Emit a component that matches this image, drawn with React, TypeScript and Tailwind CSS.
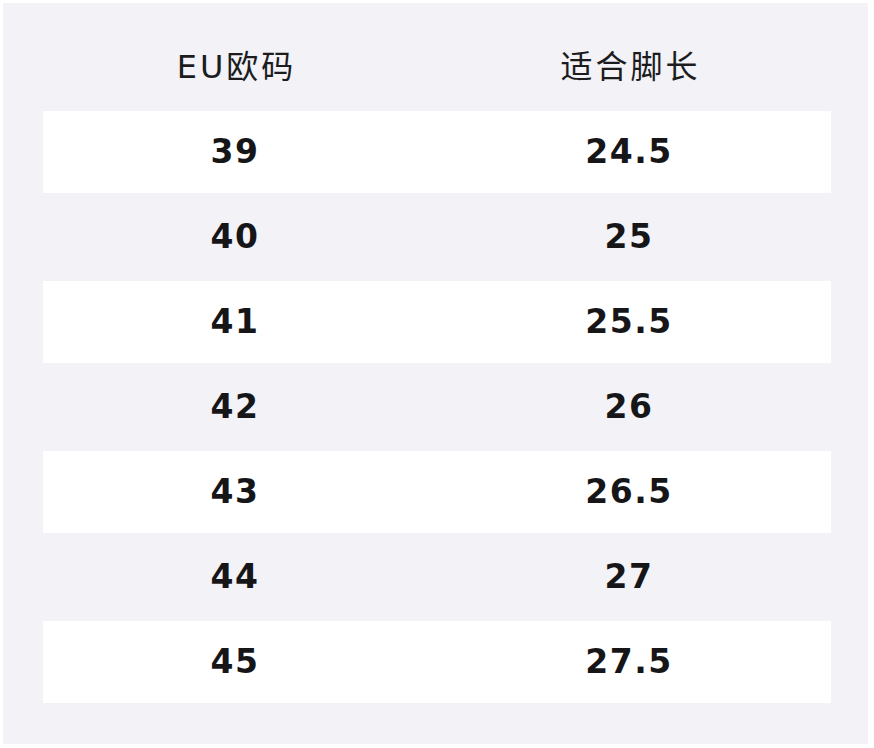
import React from 'react';

const rows: [string, string][] = [
    ['39', '24.5'],
    ['40', '25'],
    ['41', '25.5'],
    ['42', '26'],
    ['43', '26.5'],
    ['44', '27'],
    ['45', '27.5'],
];

export default function App() {
    return (
        <div className="w-[874px] h-[748px] bg-white pt-[3px] pl-[3px] font-['DejaVu_Sans','Noto_Sans_CJK_SC',sans-serif]">
            <div className="w-[865px] h-[741px] bg-[#f2f2f7] pt-[20px] pl-[40px]">
                {/* Header */}
                <div className="w-[788px] h-[88px] grid grid-cols-[384px_1fr] items-center text-[32px] tracking-[3px] text-[#1c1c1e]">
                    <div className="text-center pl-[3px]">EU欧码</div>
                    <div className="text-center pl-[3px]">适合脚长</div>
                </div>

                {/* Size rows */}
                {rows.map(([eu, len], i) => (
                    <div
                        key={eu}
                        className={
                            i % 2 === 0
                                ? 'w-[788px] h-[82px] bg-white grid grid-cols-[384px_1fr] items-center text-[33px] font-bold tracking-[1.5px] text-[#161618]'
                                : 'w-[788px] h-[88px] grid grid-cols-[384px_1fr] items-center text-[33px] font-bold tracking-[1.5px] text-[#161618]'
                        }
                    >
                        <div className="text-center">{eu}</div>
                        <div className="text-center">{len}</div>
                    </div>
                ))}
            </div>
        </div>
    );
}
